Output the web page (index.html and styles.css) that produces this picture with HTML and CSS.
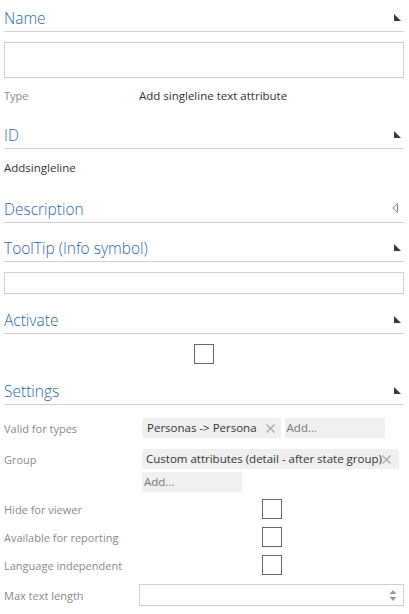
FILE: index.html
```html
<!DOCTYPE html>
<html>
<head>
<meta charset="utf-8">
<link rel="stylesheet" href="styles.css">
</head>
<body>
<div class="form">
  <div class="sec-head s-name"><span>Name</span><svg class="tri" width="7" height="7" viewBox="0 0 7 7"><polygon points="0,0 0,7 7,7" /></svg></div>
  <div class="text-input tall"></div>
  <div class="row r-type"><span class="label">Type</span><span class="value">Add singleline text attribute</span></div>

  <div class="sec-head s-id"><span>ID</span><svg class="tri" width="7" height="7" viewBox="0 0 7 7"><polygon points="0,0 0,7 7,7" /></svg></div>
  <div class="plain r-id">Addsingleline</div>

  <div class="sec-head s-desc"><span>Description</span><svg class="tri-open" width="6" height="10" viewBox="0 0 6 10"><polygon points="5.5,0.5 5.5,9.5 0.8,5" /></svg></div>

  <div class="sec-head s-tip"><span>ToolTip (Info symbol)</span><svg class="tri" width="7" height="7" viewBox="0 0 7 7"><polygon points="0,0 0,7 7,7" /></svg></div>
  <div class="text-input short"></div>

  <div class="sec-head s-act"><span>Activate</span><svg class="tri" width="7" height="7" viewBox="0 0 7 7"><polygon points="0,0 0,7 7,7" /></svg></div>
  <div class="center-check"><span class="checkbox"></span></div>

  <div class="sec-head s-set"><span>Settings</span><svg class="tri" width="7" height="7" viewBox="0 0 7 7"><polygon points="0,0 0,7 7,7" /></svg></div>

  <div class="settings">
    <div class="srow r-valid">
      <span class="label">Valid for types</span>
      <div class="tags">
        <span class="tag">Personas -&gt; Persona<svg class="x" width="9" height="9" viewBox="0 0 9 9"><path d="M0.5 0.5 L8.5 8.5 M8.5 0.5 L0.5 8.5" /></svg></span>
        <span class="add w100">Add...</span>
      </div>
    </div>
    <div class="srow r-group">
      <span class="label">Group</span>
      <div class="tags col">
        <span class="tag wide">Custom attributes (detail - after state group)<svg class="x" width="9" height="9" viewBox="0 0 9 9"><path d="M0.5 0.5 L8.5 8.5 M8.5 0.5 L0.5 8.5" /></svg></span>
        <span class="add w100">Add...</span>
      </div>
    </div>
    <div class="srow r-check"><span class="label">Hide for viewer</span><div class="cb-cell"><span class="checkbox"></span></div></div>
    <div class="srow r-check"><span class="label">Available for reporting</span><div class="cb-cell"><span class="checkbox"></span></div></div>
    <div class="srow r-check"><span class="label">Language independent</span><div class="cb-cell"><span class="checkbox"></span></div></div>
    <div class="srow r-max"><span class="label">Max text length</span>
      <div class="num-input">
        <svg class="spin" width="8" height="14" viewBox="0 0 8 14"><polygon points="4,2 7.5,6 0.5,6" /><polygon points="0.5,9 7.5,9 4,13" /></svg>
      </div>
    </div>
  </div>
</div>
</body>
</html>
```
FILE: styles.css
```css
* { box-sizing: border-box; }
html, body { margin: 0; padding: 0; background: #fff; }
body {
  font-family: "Open Sans", "Noto Sans", "Liberation Sans", sans-serif;
  font-size: 11.5px;
  color: #333;
}
.form { padding: 0 5px 0 4px; width: 409px; }

.sec-head {
  display: flex;
  justify-content: space-between;
  align-items: center;
  font-size: 15.5px;
  font-weight: 300;
  line-height: 22px;
  height: 26px;
  padding-bottom: 3px;
  border-bottom: 1px solid #cfcfcf;
  color: #2a66b3;
}
.sec-head span { padding-top: 2px; }
.sec-head .tri { fill: #3a3a3a; margin-right: 3px; margin-top: 1px; }
.sec-head .tri-open { fill: none; stroke: #888; stroke-width: 1; margin-right: 6px; }

.s-name { margin-top: 6px; }
.s-id { margin-top: 17px; }
.s-desc { margin-top: 19px; }
.s-tip { margin-top: 13px; }
.s-act { margin-top: 14px; }
.s-set { margin-top: 15px; }

.text-input { border: 1px solid #cfcfcf; background: #fff; width: 100%; }
.text-input.tall { height: 36px; margin-top: 10px; }
.text-input.short { height: 22px; margin-top: 10px; }

.row { display: grid; grid-template-columns: 135px 1fr; line-height: 20px; }
.r-type { margin-top: 8px; }
.label { color: #8a8a8a; font-size: 11px; }
.value { color: #333; }

.plain { line-height: 20px; margin-top: 9px; color: #333; }

.center-check { display: flex; justify-content: center; margin-top: 10px; }
.checkbox { display: block; width: 20px; height: 20px; border: 1px solid #666; background: #fff; }

.settings { display: flex; flex-direction: column; margin-top: 13px; }
.srow { display: grid; grid-template-columns: 135px 1fr; align-items: start; }
.srow .label { line-height: 20px; padding-top: 1px; }
.r-group { margin-top: 10px; }
.r-check { margin-top: 8px; height: 20px; }
.r-group + .r-check { margin-top: 7px; }
.r-max { margin-top: 9px; }
.r-max .label { line-height: 22px; }

.tags { display: flex; gap: 4px; padding-left: 3px; }
.tags.col { flex-direction: column; gap: 3px; align-items: flex-start; }
.tag {
  display: flex; align-items: center;
  height: 20px; line-height: 20px;
  background: #efefef; border-radius: 3px;
  padding: 0 6px 0 5px; color: #333; white-space: nowrap;
}
.tag .x { stroke: #aaa; stroke-width: 1.2; fill: none; margin-left: 9px; }
.tag.wide { width: 257px; padding: 0 8px 0 4px; justify-content: space-between; }
.tag.wide .x { margin-left: 0; }
.add {
  display: block; height: 20px; line-height: 20px;
  background: #efefef; color: #777; padding: 0 2px;
}
.w100 { width: 100px; }

.cb-cell { display: flex; justify-content: center; }

.num-input {
  height: 22px; border: 1px solid #cfcfcf;
  display: flex; justify-content: flex-end; align-items: center; padding-right: 6px;
}
.spin { fill: #999; }
```
